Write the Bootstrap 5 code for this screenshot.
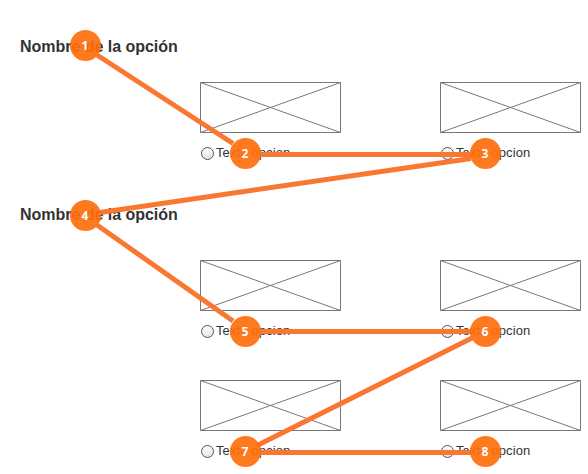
<!DOCTYPE html>
<html lang="es">
<head>
<meta charset="utf-8">
<meta name="viewport" content="width=device-width, initial-scale=1">
<title>Nombre de la opción</title>
<link href="https://cdn.jsdelivr.net/npm/bootstrap@5.3.0/dist/css/bootstrap.min.css" rel="stylesheet">
<style>
body{font-family:"Liberation Sans",Arial,sans-serif;color:#333;background:#fff}
.board{width:588px;height:474px;padding:38px 0 0 20px}
.group-title{font-size:16px;line-height:18px;font-weight:700;margin:0;letter-spacing:-.03px}
.option-grid{display:grid;grid-template-columns:141px 141px;column-gap:99px;row-gap:40px;padding-left:180px;margin-top:26px}
.option-grid.second{margin-top:36px}
.group-one{height:168px}
.wire{display:block;width:141px;height:51px}
.choice{height:15px;margin-top:13px;font-size:13px;line-height:15px;gap:1px;letter-spacing:.12px}
.choice svg{flex:none;width:15px;height:15px}
.choice span{margin-top:-1px}
.option-grid .option{height:80px}
.flow{left:0;top:0;pointer-events:none}
.flow text{font:700 12px "Open Sans",sans-serif;fill:#fff;text-anchor:middle}
</style>
<script src="https://cdn.jsdelivr.net/npm/bootstrap@5.3.0/dist/js/bootstrap.bundle.min.js"></script>
</head>
<body class="overflow-hidden">
<svg width="0" height="0" class="position-absolute" aria-hidden="true">
<defs>
<linearGradient id="radioFill" x1="0" y1="0" x2="0" y2="1"><stop offset="0" stop-color="#fff"/><stop offset="1" stop-color="#e4e4e4"/></linearGradient>
<symbol id="wire" viewBox="0 0 141 51"><path d="M.5 .5H140.5V50.5H.5ZL140.5 50.5M140.5 .5L.5 50.5" fill="none" stroke="#777"/></symbol>
<symbol id="radio" viewBox="0 0 15 15"><circle cx="7.5" cy="7.5" r="6" fill="url(#radioFill)" stroke="#555"/></symbol>
</defs>
</svg>
<main class="board position-relative overflow-hidden">
<section class="group-one">
<h2 class="group-title">Nombre de la opción</h2>
<div class="option-grid">
<div class="option"><svg class="wire"><use href="#wire"/></svg><div class="choice d-flex"><svg><use href="#radio"/></svg><span>Texto opcion</span></div></div>
<div class="option"><svg class="wire"><use href="#wire"/></svg><div class="choice d-flex"><svg><use href="#radio"/></svg><span>Texto opcion</span></div></div>
</div>
</section>
<section>
<h2 class="group-title">Nombre de la opción</h2>
<div class="option-grid second">
<div class="option"><svg class="wire"><use href="#wire"/></svg><div class="choice d-flex"><svg><use href="#radio"/></svg><span>Texto opcion</span></div></div>
<div class="option"><svg class="wire"><use href="#wire"/></svg><div class="choice d-flex"><svg><use href="#radio"/></svg><span>Texto opcion</span></div></div>
<div class="option"><svg class="wire"><use href="#wire"/></svg><div class="choice d-flex"><svg><use href="#radio"/></svg><span>Texto opcion</span></div></div>
<div class="option"><svg class="wire"><use href="#wire"/></svg><div class="choice d-flex"><svg><use href="#radio"/></svg><span>Texto opcion</span></div></div>
</div>
</section>
<svg class="flow position-absolute" width="588" height="474" viewBox="0 0 588 474">
<path d="M97 55L233 143.500M260 154.500H471M471 158.500L100 212.500M97 225L233 321M260 331.500H471M472 338L258 445M260 452.500H471" fill="none" stroke="#f97730" stroke-width="5"/>
<g fill="#ff6f0c" fill-opacity=".92">
<circle cx="85.500" cy="45.500" r="15.500"/><circle cx="245.500" cy="153.500" r="15.500"/><circle cx="485.500" cy="153.500" r="15.500"/><circle cx="85.500" cy="215.500" r="15.500"/><circle cx="245.500" cy="331.500" r="15.500"/><circle cx="485.500" cy="331.500" r="15.500"/><circle cx="245.500" cy="451.500" r="15.500"/><circle cx="485.500" cy="451.500" r="15.500"/>
</g>
<text x="85" y="50">1</text><text x="245" y="158">2</text><text x="485" y="158">3</text><text x="85" y="220">4</text><text x="245" y="336">5</text><text x="485" y="336">6</text><text x="245" y="456">7</text><text x="485" y="456">8</text>
</svg>
</main>
</body>
</html>
